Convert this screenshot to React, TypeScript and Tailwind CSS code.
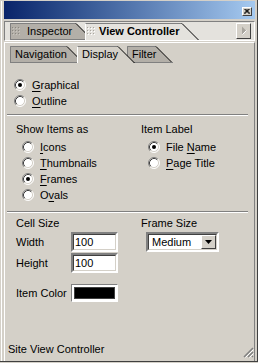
import React from "react";

const LIGHT = "#ffffff";
const SHADE = "#808080";
const DARK = "#404040";

function Grip({ light }: { light?: boolean }) {
  const dots = [];
  for (let i = 0; i < 3; i++) {
    for (let j = 0; j < 3; j++) {
      dots.push(
        <g key={`${i}-${j}`}>
          <rect x={i * 3} y={j * 3 + 1} width="1" height="1" fill={light ? "#a8a59e" : "#8a8780"} />
          <rect x={i * 3 + 1} y={j * 3 + 2} width="1" height="1" fill={light ? "#ffffff" : "#c8c5be"} />
        </g>
      );
    }
  }
  return (
    <svg width="9" height="11" viewBox="0 0 9 11" className="shrink-0">
      {dots}
    </svg>
  );
}

type TabProps = {
  w: number;
  label: string;
  active?: boolean;
  bold?: boolean;
  grip?: boolean;
  fill: string;
  className: string;
  labelClass: string;
};

function Tab({ w, label, active, bold, grip, fill, className, labelClass }: TabProps) {
  const h = 17;
  const s = 16;
  return (
    <div className={`relative h-[17px] shrink-0 ${className}`}>
      <svg className="absolute left-0 top-0" width={w} height={h} viewBox={`0 0 ${w} ${h}`}>
        <polygon points={`0,${h} 0,0 ${w - s - 1},0 ${w - 1},${h}`} fill={fill} />
        <path d={`M0.5 ${h} V0.5 H${w - s - 1}`} stroke={active ? LIGHT : SHADE} fill="none" />
        <path d={`M0.5 0.5 H${w - s - 1}`} stroke={SHADE} fill="none" />
        <path d={`M${w - s - 1} 0.5 L${w - 0.5} ${h}`} stroke="#000" fill="none" />
        {!active && <path d={`M0 ${h - 0.5} H${w}`} stroke={SHADE} />}
      </svg>
      <div className={`relative flex h-full items-center ${labelClass}`}>
        {grip && <Grip light={active} />}
        <span className={bold ? "font-bold" : ""}>{label}</span>
      </div>
    </div>
  );
}

function Radio({ checked }: { checked?: boolean }) {
  return (
    <svg width="12" height="12" viewBox="0 0 12 12" className="shrink-0">
      <circle cx="6" cy="6" r="5" fill="#fff" />
      <path d="M2.11 9.89 A5.5 5.5 0 0 1 9.89 2.11" stroke={SHADE} fill="none" />
      <path d="M9.89 2.11 A5.5 5.5 0 0 1 2.11 9.89" stroke={LIGHT} fill="none" />
      <path d="M2.82 9.18 A4.5 4.5 0 0 1 9.18 2.82" stroke={DARK} fill="none" />
      <path d="M9.18 2.82 A4.5 4.5 0 0 1 2.82 9.18" stroke="#d4d0c8" fill="none" />
      {checked && <circle cx="6" cy="6" r="2" fill="#000" />}
    </svg>
  );
}

function Option({ checked, pre, u, post }: { checked?: boolean; pre?: string; u: string; post: string }) {
  return (
    <div className="flex h-4 items-center gap-[6px]">
      <Radio checked={checked} />
      <span>
        {pre}
        <span className="underline underline-offset-[2px]">{u}</span>
        {post}
      </span>
    </div>
  );
}

function Separator() {
  return <div className="ml-[2px] mr-[6px] h-[2px] border-t border-b border-t-[#808080] border-b-white" />;
}

function Field({ value }: { value: string }) {
  return (
    <div className="h-[20px] w-[47px] border-2 border-t-[#808080] border-l-[#808080] border-b-white border-r-white">
      <div className="flex h-full items-center border border-t-[#404040] border-l-[#404040] border-b-[#d4d0c8] border-r-[#d4d0c8] bg-white pl-px">
        {value}
      </div>
    </div>
  );
}

export default function App() {
  return (
    <div className="h-[363px] w-[258px] bg-[#d4d0c8] font-['Liberation_Sans',Arial,sans-serif] text-[11px] leading-none text-black">
      <div className="relative flex h-[362px] w-[258px] flex-col border-r border-b border-[#404040] pt-px">
        <div className="ml-px flex h-full flex-col border-l border-white pl-[2px] pr-[2px]">
          {/* title bar */}
          <div className="flex h-[18px] items-end justify-end bg-linear-to-r from-[#0a246a] to-[#a6caf0] pr-[3px] pb-[3px]">
            <div className="flex h-[9px] w-[10px] items-center justify-center border border-t-white border-l-white border-b-[#404040] border-r-[#404040] bg-[#d4d0c8]">
              <svg width="6" height="5" viewBox="0 0 6 5">
                <path d="M0.5 0 L5.5 5 M5.5 0 L0.5 5 M1.5 0 L6 4.5 M4.5 0 L0 4.5" stroke="#000" strokeWidth="1" />
              </svg>
            </div>
          </div>

          {/* panel tabs */}
          <div className="mt-[2px] flex h-[20px] items-end border border-t-[#808080] border-l-[#808080] border-b-white border-r-white bg-[#e4e2dd] pl-[5px]">
            <Tab
              w={83}
              label="Inspector"
              grip
              fill="#b3afa8"
              className="w-[83px]"
              labelClass="pl-[2px] gap-[6px]"
            />
            <Tab
              w={114}
              label="View Controller"
              grip
              active
              bold
              fill="#e4e2dd"
              className="z-10 -ml-[8px] w-[114px]"
              labelClass="pl-[2px] gap-[3px]"
            />
            <div className="mr-[3px] mb-px ml-auto flex h-[16px] w-[15px] items-center justify-center self-center border border-t-white border-l-white border-b-[#404040] border-r-[#404040] bg-[#d4d0c8]">
              <svg width="6" height="9" viewBox="0 0 6 9">
                <path d="M1 0.5 L5 4.5 L1 8.5 Z" fill="#a8a59e" />
                <path d="M1.5 8.5 L5.5 4.5" stroke="#fff" />
              </svg>
            </div>
          </div>

          {/* content panel */}
          <div className="mt-px flex flex-1 flex-col border-t border-l border-r border-t-white border-l-white border-r-[#808080]">
            <div className="mt-[3px] flex h-[17px] pl-[5px]">
              <Tab w={74} label="Navigation" fill="#b3afa8" className="w-[74px]" labelClass="pl-[5px]" />
              <Tab
                w={58}
                label="Display"
                active
                fill="#d4d0c8"
                className="z-10 -ml-[7px] w-[58px]"
                labelClass="pl-[5px]"
              />
              <Tab w={46} label="Filter" fill="#b3afa8" className="-ml-[8px] w-[46px]" labelClass="pl-[5px]" />
            </div>

            <div className="mt-[14px] flex flex-col pl-[9px]">
              <Option checked u="G" post="raphical" />
              <Option u="O" post="utline" />
            </div>

            <div className="mt-[5px]">
              <Separator />
            </div>

            <div className="mt-[5px] grid grid-cols-[125px_1fr] pl-[11px]">
              <div className="flex flex-col">
                <div className="flex h-4 items-center">Show Items as</div>
                <div className="mt-[2px] flex flex-col pl-[6px]">
                  <Option u="I" post="cons" />
                  <Option u="T" post="humbnails" />
                  <Option checked u="F" post="rames" />
                  <Option pre="O" u="v" post="als" />
                </div>
              </div>
              <div className="flex flex-col">
                <div className="flex h-4 items-center">Item Label</div>
                <div className="mt-[2px] flex flex-col pl-[7px]">
                  <Option checked pre="File " u="N" post="ame" />
                  <Option u="P" post="age Title" />
                </div>
              </div>
            </div>

            <div className="mt-[8px]">
              <Separator />
            </div>

            <div className="mt-[2px] grid grid-cols-[125px_1fr] pl-[11px]">
              <div className="flex flex-col">
                <div className="flex h-4 items-center">Cell Size</div>
                <div className="mt-px flex h-[20px] items-center">
                  <span className="w-[55px]">Width</span>
                  <Field value="100" />
                </div>
                <div className="mt-px flex h-[20px] items-center">
                  <span className="w-[55px]">Height</span>
                  <Field value="100" />
                </div>
              </div>
              <div className="flex flex-col">
                <div className="flex h-4 items-center">Frame Size</div>
                <div className="mt-px ml-[5px] h-[20px] w-[73px] border-2 border-t-[#808080] border-l-[#808080] border-b-white border-r-white">
                  <div className="flex h-full items-center justify-between border border-t-[#404040] border-l-[#404040] border-b-[#d4d0c8] border-r-[#d4d0c8] bg-white pl-[3px]">
                    <span>Medium</span>
                    <div className="flex h-[14px] w-[15px] items-center justify-center border border-t-white border-l-white border-b-[#404040] border-r-[#404040] bg-[#d4d0c8]">
                      <svg width="7" height="4" viewBox="0 0 7 4">
                        <path d="M0 0 H7 L3.5 4 Z" fill="#000" />
                      </svg>
                    </div>
                  </div>
                </div>
              </div>
            </div>

            <div className="mt-[11px] flex h-[18px] items-center pl-[11px]">
              <span className="w-[55px]">Item Color</span>
              <div className="h-[18px] w-[47px] border border-t-[#808080] border-l-[#808080] border-b-white border-r-white">
                <div className="h-full border-2 border-white">
                  <div className="h-full border border-[#404040] bg-black" />
                </div>
              </div>
            </div>

            <div className="flex-1" />

            <div className="mb-[4px] flex h-4 items-center pl-[3px]">Site View Controller</div>
          </div>
        </div>

        {/* resize grip */}
        <svg className="absolute right-[3px] bottom-[3px]" width="11" height="11" viewBox="0 0 11 11">
          <path d="M10 1 L1 10 M10 5 L5 10 M10 9 L9 10" stroke="#808080" strokeWidth="1.5" />
          <path d="M10.5 2.5 L2.5 10.5 M10.5 6.5 L6.5 10.5" stroke="#fff" strokeWidth="1" />
        </svg>
      </div>
    </div>
  );
}
